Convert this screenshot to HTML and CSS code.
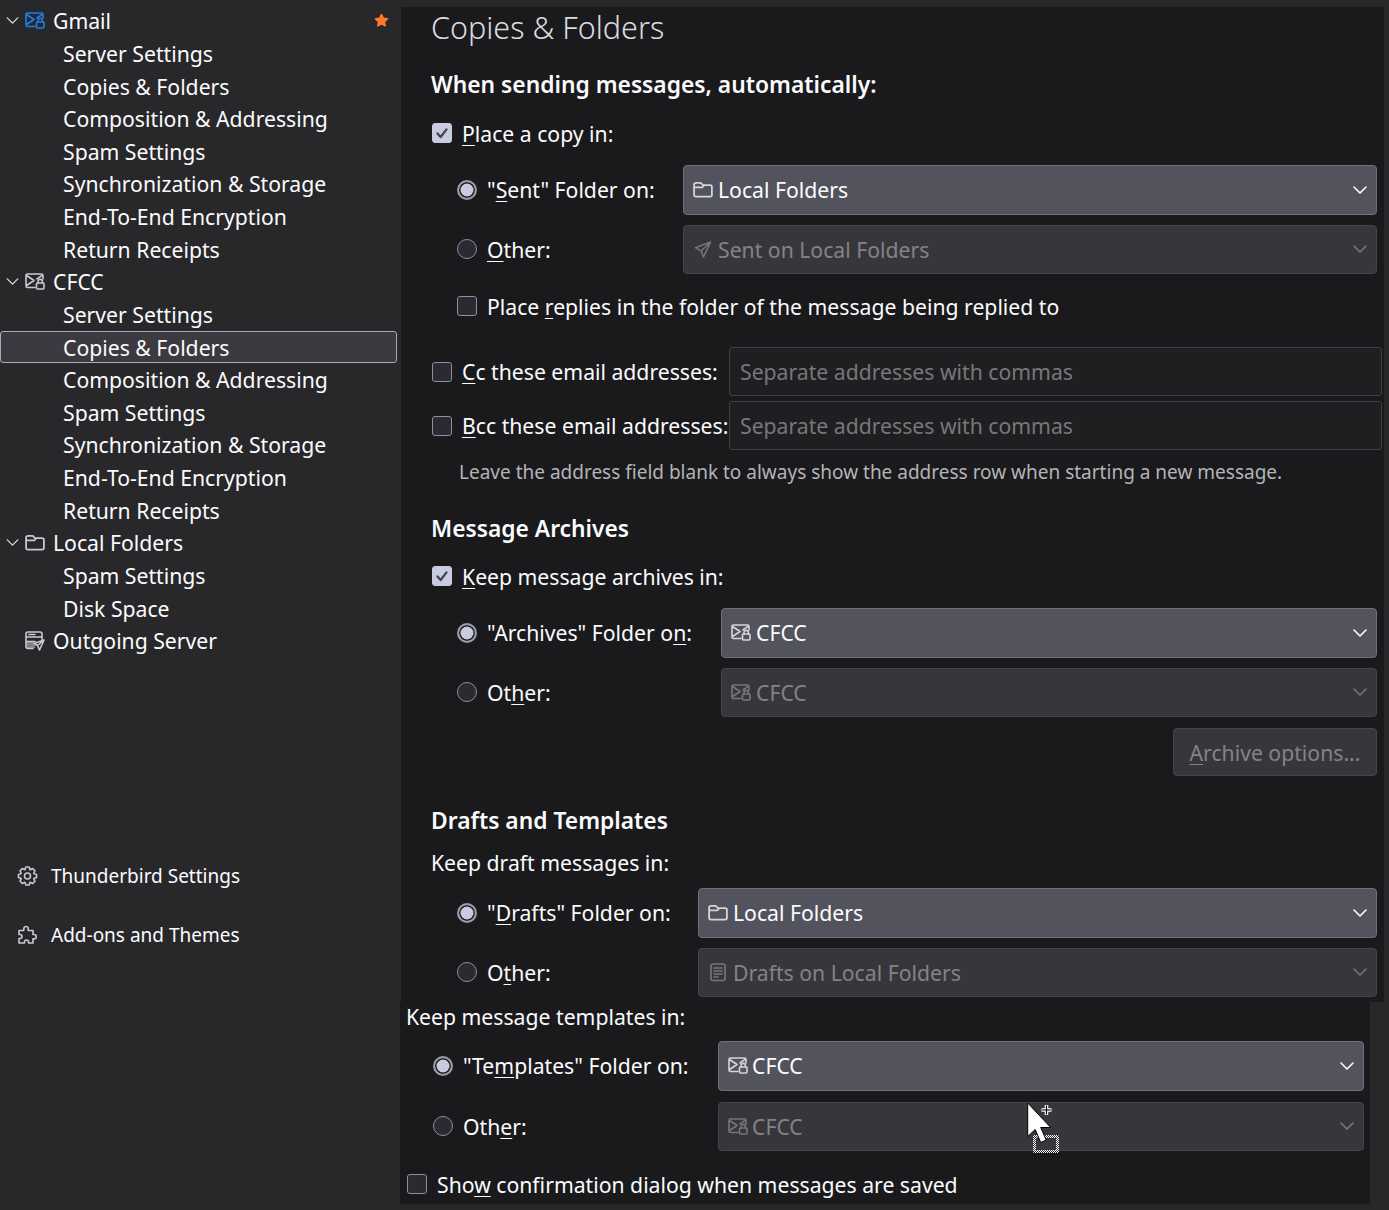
FILE: index.html
```html
<!DOCTYPE html>
<html lang="en">
<head>
    <meta charset="UTF-8">
    <title>Account Settings</title>
    <link rel="stylesheet" href="styles.css">
</head>
<body>
    <svg class="sprite">
        <symbol id="i-account" viewBox="0 0 20 17">
            <path d="M10 14.500H2.500A1.500 1.500 0 0 1 1 13V2.500A1.500 1.500 0 0 1 2.500 1h14A1.500 1.500 0 0 1 18 2.500V6M1.500 2.500 9 7.500l-7.500 5M12 6l5-3.600"/>
            <rect x="11.500" y="10" width="7.500" height="6" rx="1"/>
            <path d="M13 10V8.600a2.200 2.200 0 0 1 4.400 0V10"/>
        </symbol>
        <symbol id="i-folder" viewBox="0 0 18 15">
            <path d="M1 3A1.500 1.500 0 0 1 2.500 1.500H7L9 3.500h6.500A1.500 1.500 0 0 1 17 5v7.500a1.500 1.500 0 0 1-1.500 1.500h-13A1.500 1.500 0 0 1 1 12.500zM1 5.500h7.500L10 3.800"/>
        </symbol>
        <symbol id="i-send" viewBox="0 0 19 19">
            <path d="M18 1 1 7.500l6.500 3.500L10 18zM7.500 11 18 1"/>
        </symbol>
        <symbol id="i-draft" viewBox="0 0 16 19">
            <rect x="1" y="1" width="14" height="16.500" rx="2"/>
            <path d="M4 5h8M4 8h8M4 11h8M4 14h4"/>
        </symbol>
        <symbol id="i-outgoing" viewBox="0 0 20 20">
            <path d="M8 17.500H3A2 2 0 0 1 1 15.500V3a2 2 0 0 1 2-2h12a2 2 0 0 1 2 2v5.500M1 6h16M4 3.500h6M1 10.500h9"/>
            <path class="solid" d="M1.500 11h7.500l1.500 6H3a1.500 1.500 0 0 1-1.500-1.500z"/>
            <path d="M19 9 9 12.500l3.500 2L14.500 19zM12.500 14.500 19 9"/>
        </symbol>
        <symbol id="i-gear" viewBox="0 0 20 20">
            <path d="M19 8.400V11.600L16.300 12.600 17.400 15.200 15.200 17.400 12.600 16.300 11.600 19H8.400L7.400 16.300 4.800 17.400 2.600 15.200 3.700 12.600 1 11.600V8.400L3.700 7.400 2.600 4.800 4.800 2.600 7.400 3.700 8.400 1H11.600L12.600 3.700 15.200 2.600 17.400 4.800 16.300 7.400z"/>
            <circle cx="10" cy="10" r="3"/>
        </symbol>
        <symbol id="i-addon" viewBox="0 0 21 20">
            <path d="M9 1.500a2.200 2.200 0 0 1 2.200 2.200v1.800H16v4h1a2.200 2.200 0 0 1 0 4.400h-1V18h-4.500v-1a2 2 0 0 0-4 0v1H2v-4.500h1a2 2 0 0 0 0-4H2v-4h4.800V3.700A2.200 2.200 0 0 1 9 1.500z"/>
        </symbol>
        <symbol id="i-chevron" viewBox="0 0 14 8">
            <path d="M1 1l6 6 6-6"/>
        </symbol>
        <symbol id="i-check" viewBox="0 0 20 20">
            <path d="M5 10.500 8.500 14.500 15 6"/>
        </symbol>
    </svg>

    <aside class="sidebar">
        <ul class="tree">
            <li class="tree-account is-default">
                <svg class="twisty"><use href="#i-chevron"/></svg>
                <svg class="tree-icon"><use href="#i-account"/></svg>
                Gmail
                <svg class="star" viewBox="0 0 14 14"><path d="M7 1.500 8.700 5l3.800.5-2.800 2.600.7 3.800L7 10.100 3.600 11.900l.7-3.800L1.500 5.500 5.300 5z"/></svg>
            </li>
            <li class="tree-item">Server Settings</li>
            <li class="tree-item">Copies &amp; Folders</li>
            <li class="tree-item">Composition &amp; Addressing</li>
            <li class="tree-item">Spam Settings</li>
            <li class="tree-item">Synchronization &amp; Storage</li>
            <li class="tree-item">End-To-End Encryption</li>
            <li class="tree-item">Return Receipts</li>
            <li class="tree-account">
                <svg class="twisty"><use href="#i-chevron"/></svg>
                <svg class="tree-icon"><use href="#i-account"/></svg>
                CFCC
            </li>
            <li class="tree-item">Server Settings</li>
            <li class="tree-item is-selected">Copies &amp; Folders</li>
            <li class="tree-item">Composition &amp; Addressing</li>
            <li class="tree-item">Spam Settings</li>
            <li class="tree-item">Synchronization &amp; Storage</li>
            <li class="tree-item">End-To-End Encryption</li>
            <li class="tree-item">Return Receipts</li>
            <li class="tree-account">
                <svg class="twisty"><use href="#i-chevron"/></svg>
                <svg class="tree-icon"><use href="#i-folder"/></svg>
                Local Folders
            </li>
            <li class="tree-item">Spam Settings</li>
            <li class="tree-item">Disk Space</li>
            <li class="tree-account no-twisty">
                <svg class="tree-icon tall"><use href="#i-outgoing"/></svg>
                Outgoing Server
            </li>
        </ul>
        <nav class="side-links">
            <a class="side-link"><svg class="side-icon"><use href="#i-gear"/></svg>Thunderbird Settings</a>
            <a class="side-link"><svg class="side-icon"><use href="#i-addon"/></svg>Add-ons and Themes</a>
        </nav>
    </aside>

    <main class="main">
        <section class="panel panel-top">
            <h1 class="page-title">Copies &amp; Folders</h1>

            <h2 class="section-title first">When sending messages, automatically:</h2>
            <div class="check-row gap-14"><span class="checkbox is-checked"><svg><use href="#i-check"/></svg></span><span><u>P</u>lace a copy in:</span></div>

            <div class="choices choices-sent">
                <div class="choice">
                    <span class="radio-label"><span class="radio is-checked"></span><span>"<u>S</u>ent" Folder on:</span></span>
                    <div class="select"><svg class="select-icon"><use href="#i-folder"/></svg>Local Folders<svg class="select-arrow"><use href="#i-chevron"/></svg></div>
                </div>
                <div class="choice">
                    <span class="radio-label"><span class="radio"></span><span><u>O</u>ther:</span></span>
                    <div class="select is-disabled"><svg class="select-icon"><use href="#i-send"/></svg>Sent on Local Folders<svg class="select-arrow"><use href="#i-chevron"/></svg></div>
                </div>
            </div>
            <div class="check-row nested gap-15"><span class="checkbox"></span><span>Place <u>r</u>eplies in the folder of the message being replied to</span></div>

            <div class="address-row gap-24"><span class="check-row"><span class="checkbox"></span><span><u>C</u>c these email addresses:</span></span><div class="text-input">Separate addresses with commas</div></div>
            <div class="address-row gap-5"><span class="check-row"><span class="checkbox"></span><span><u>B</u>cc these email addresses:</span></span><div class="text-input">Separate addresses with commas</div></div>
            <p class="hint">Leave the address field blank to always show the address row when starting a new message.</p>

            <h2 class="section-title gap-25">Message Archives</h2>
            <div class="check-row gap-13"><span class="checkbox is-checked"><svg><use href="#i-check"/></svg></span><span><u>K</u>eep message archives in:</span></div>
            <div class="choices choices-archives">
                <div class="choice">
                    <span class="radio-label"><span class="radio is-checked"></span><span>"Archives" Folder o<u>n</u>:</span></span>
                    <div class="select"><svg class="select-icon"><use href="#i-account"/></svg>CFCC<svg class="select-arrow"><use href="#i-chevron"/></svg></div>
                </div>
                <div class="choice">
                    <span class="radio-label"><span class="radio"></span><span>Ot<u>h</u>er:</span></span>
                    <div class="select is-disabled"><svg class="select-icon"><use href="#i-account"/></svg>CFCC<svg class="select-arrow"><use href="#i-chevron"/></svg></div>
                </div>
            </div>
            <div class="button-row"><button class="button" disabled><u>A</u>rchive options...</button></div>

            <h2 class="section-title gap-28">Drafts and Templates</h2>
            <div class="plain-row gap-7">Keep draft messages in:</div>
            <div class="choices choices-drafts">
                <div class="choice">
                    <span class="radio-label"><span class="radio is-checked"></span><span>"<u>D</u>rafts" Folder on:</span></span>
                    <div class="select"><svg class="select-icon"><use href="#i-folder"/></svg>Local Folders<svg class="select-arrow"><use href="#i-chevron"/></svg></div>
                </div>
                <div class="choice">
                    <span class="radio-label"><span class="radio"></span><span>O<u>t</u>her:</span></span>
                    <div class="select is-disabled"><svg class="select-icon draft"><use href="#i-draft"/></svg>Drafts on Local Folders<svg class="select-arrow"><use href="#i-chevron"/></svg></div>
                </div>
            </div>
        </section>

        <section class="panel panel-bottom">
            <div class="plain-row short">Keep message templates in:</div>
            <div class="choices choices-templates">
                <div class="choice">
                    <span class="radio-label"><span class="radio is-checked"></span><span>"Te<u>m</u>plates" Folder on:</span></span>
                    <div class="select"><svg class="select-icon"><use href="#i-account"/></svg>CFCC<svg class="select-arrow"><use href="#i-chevron"/></svg></div>
                </div>
                <div class="choice">
                    <span class="radio-label"><span class="radio"></span><span>Oth<u>e</u>r:</span></span>
                    <div class="select is-disabled"><svg class="select-icon"><use href="#i-account"/></svg>CFCC<svg class="select-arrow"><use href="#i-chevron"/></svg></div>
                </div>
            </div>
            <div class="check-row gap-16"><span class="checkbox"></span><span>Sho<u>w</u> confirmation dialog when messages are saved</span></div>
        </section>
    </main>

    <!-- drag cursor sits on top of the Other dropdown -->
    <svg class="cursor" viewBox="0 0 34 52">
        <defs>
            <pattern id="dither" width="2" height="2" patternUnits="userSpaceOnUse">
                <rect width="1" height="1" fill="#fff"/>
                <rect x="1" y="1" width="1" height="1" fill="#fff"/>
            </pattern>
        </defs>
        <rect x="7.500" y="34.500" width="23" height="15" fill="none" stroke="url(#dither)" stroke-width="3"/>
        <path d="M.7 1v33.500l7.500-7 5.500 13 5.500-2.500-5.500-12.500h10z" fill="#fff" stroke="#000"/>
        <path d="M14.500 8h10M19.500 3v10" stroke="#fff" stroke-width="3.500" fill="none"/>
        <path d="M15 8h9M19.500 3.500v9" stroke="#000" stroke-width="1.200" fill="none"/>
    </svg>
</body>
</html>
```

FILE: styles.css
```css
* {
    margin: 0;
    padding: 0;
    box-sizing: border-box;
}

html, body {
    height: 1210px;
    overflow: hidden;
}

body {
    display: flex;
    position: relative;
    background: #28282b;
    color: #fbfbfe;
    font-family: "Noto Sans", "Open Sans", sans-serif;
    font-size: 21.2px;
}

u {
    text-decoration-thickness: 1px;
    text-underline-offset: 3px;
}

.sprite {
    display: none;
}

svg {
    fill: none;
    stroke: currentColor;
    stroke-width: 1.6;
    stroke-linejoin: round;
    stroke-linecap: round;
    flex: none;
}

.solid {
    fill: currentColor;
    stroke: none;
    opacity: .55;
}

/* sidebar */
.sidebar {
    width: 400px;
    flex: none;
    padding-top: 4.5px;
}

.tree {
    list-style: none;
}

.tree-account,
.tree-item {
    height: 32.63px;
    display: flex;
    align-items: center;
    white-space: nowrap;
    position: relative;
}

.tree-account {
    padding-left: 6px;
    color: #fbfbfe;
}

.tree-item {
    padding-left: 63px;
    margin-right: 3px;
}

.tree-item.is-selected {
    background: #3a3a40;
    border: 1px solid #a9a9b8;
    border-radius: 3px;
    padding-left: 62px;
}

.no-twisty {
    padding-left: 25px;
}

.twisty {
    width: 13px;
    height: 7px;
    margin-right: 6px;
    color: #d5d5d9;
}

.tree-icon {
    width: 20px;
    height: 17px;
    margin-right: 8px;
    color: #c9c9cf;
}

.tree-icon.tall {
    height: 20px;
}

.is-default .tree-icon {
    color: #1c7fe6;
}

.star {
    position: absolute;
    left: 374px;
    top: 8px;
    width: 15px;
    height: 15px;
    fill: #ff7b2a;
    stroke: #ff7b2a;
    stroke-width: 1.5;
}

.side-links {
    margin-top: 200.5px;
    display: flex;
    flex-direction: column;
    gap: 22px;
}

.side-link {
    height: 37px;
    display: flex;
    align-items: center;
    gap: 13px;
    padding-left: 17px;
    font-size: 19px;
}

.side-icon {
    width: 21px;
    height: 20px;
    color: #c9c9cf;
}

/* main */
.main {
    padding-top: 7px;
    flex: 1;
    display: flex;
    flex-direction: column;
}

.panel {
    background: #1a1a1c;
}

.panel-top {
    width: 983px;
    height: 995px;
    margin-left: 1px;
    padding: 0 7px 0 30px;
}

.panel-bottom {
    width: 970px;
    height: 202px;
    padding: 0 6px;
}

.page-title {
    height: 40px;
    line-height: 40px;
    font-size: 30.5px;
    font-weight: 300;
    color: #dcdce0;
}

.section-title {
    height: 34px;
    line-height: 34px;
    font-size: 22.8px;
    font-weight: 600;
}

.section-title.first {
    margin-top: 21px;
}

.check-row,
.plain-row,
.radio-label {
    display: flex;
    align-items: center;
    gap: 10px;
    height: 34px;
    white-space: nowrap;
}

.check-row {
    margin-left: 1px;
}

.plain-row.short {
    height: 28px;
}

.check-row.nested {
    margin-left: 26px;
}

.gap-5 { margin-top: 5px; }
.gap-7 { margin-top: 7px; }
.gap-13 { margin-top: 13px; }
.gap-14 { margin-top: 14px; }
.gap-15 { margin-top: 15px; }
.gap-16 { margin-top: 16px; }
.gap-24 { margin-top: 24px; }
.gap-25 { margin-top: 25px; }
.gap-28 { margin-top: 28px; }

.checkbox {
    width: 20px;
    height: 20px;
    flex: none;
    border: 1px solid #8f8f9d;
    border-radius: 3px;
    background: #2b2a33;
}

.checkbox.is-checked {
    background: #c9cce0;
    border-color: #c9cce0;
    color: #45454f;
}

.checkbox svg {
    display: block;
    width: 18px;
    height: 18px;
    stroke-width: 2.6;
}

.radio {
    width: 20px;
    height: 20px;
    flex: none;
    border: 1px solid #8f8f9d;
    border-radius: 50%;
    background: #2b2a33;
}

.radio.is-checked {
    background: #c9cce0;
    border: 2px solid #9a9aa8;
    box-shadow: inset 0 0 0 1.5px #1a1a1c;
}

/* radio + dropdown rows */
.choices {
    margin-top: 15px;
    margin-left: 26px;
    display: flex;
    flex-direction: column;
    gap: 10px;
}

.choice {
    display: grid;
    align-items: center;
}

.choices-sent .choice { grid-template-columns: 226px 1fr; }
.choices-archives .choice { grid-template-columns: 264px 1fr; }
.choices-drafts .choice { grid-template-columns: 241px 1fr; }
.choices-drafts { margin-top: 9px; }
.choices-templates {
    margin-top: 11px;
    margin-left: 27px;
    gap: 11px;
}
.choices-templates .choice { grid-template-columns: 285px 1fr; }
.choices-templates .select-icon { margin-right: 4px; }

.select {
    height: 49.5px;
    display: flex;
    align-items: center;
    padding: 0 9px;
    background: #53535d;
    border: 1px solid #70707a;
    border-radius: 4px;
    color: #fbfbfe;
    white-space: nowrap;
}

.select.is-disabled {
    background: #37373b;
    border-color: #454549;
    color: #838387;
}

.select-icon {
    width: 20px;
    height: 17px;
    margin-right: 5px;
    color: #d5d5da;
}

.select-icon.draft {
    height: 19px;
}

.is-disabled .select-icon {
    color: #77777b;
}

.select-arrow {
    width: 14px;
    height: 8px;
    margin-left: auto;
    color: #fbfbfe;
}

.is-disabled .select-arrow {
    color: #77777b;
}

/* Cc / Bcc */
.address-row {
    display: grid;
    grid-template-columns: 298px 1fr;
    align-items: center;
    margin-right: -5px;
}

.text-input {
    height: 49px;
    line-height: 47px;
    padding-left: 10px;
    background: #1f1f22;
    border: 1px solid #3f3f43;
    border-radius: 3px;
    color: #77777b;
    white-space: nowrap;
}

.hint {
    margin-top: 7px;
    margin-left: 28px;
    height: 30px;
    line-height: 30px;
    font-size: 19px;
    color: #b4b4b8;
    white-space: nowrap;
}

.button-row {
    display: flex;
    justify-content: flex-end;
    margin-top: 11px;
}

.button {
    width: 204px;
    height: 48px;
    background: #37373b;
    border: 1px solid #454549;
    border-radius: 4px;
    color: #838387;
    font: inherit;
}

.cursor {
    position: absolute;
    left: 1027px;
    top: 1102px;
    width: 34px;
    height: 52px;
    stroke: none;
    stroke-width: 1;
    stroke-linecap: butt;
}
```
